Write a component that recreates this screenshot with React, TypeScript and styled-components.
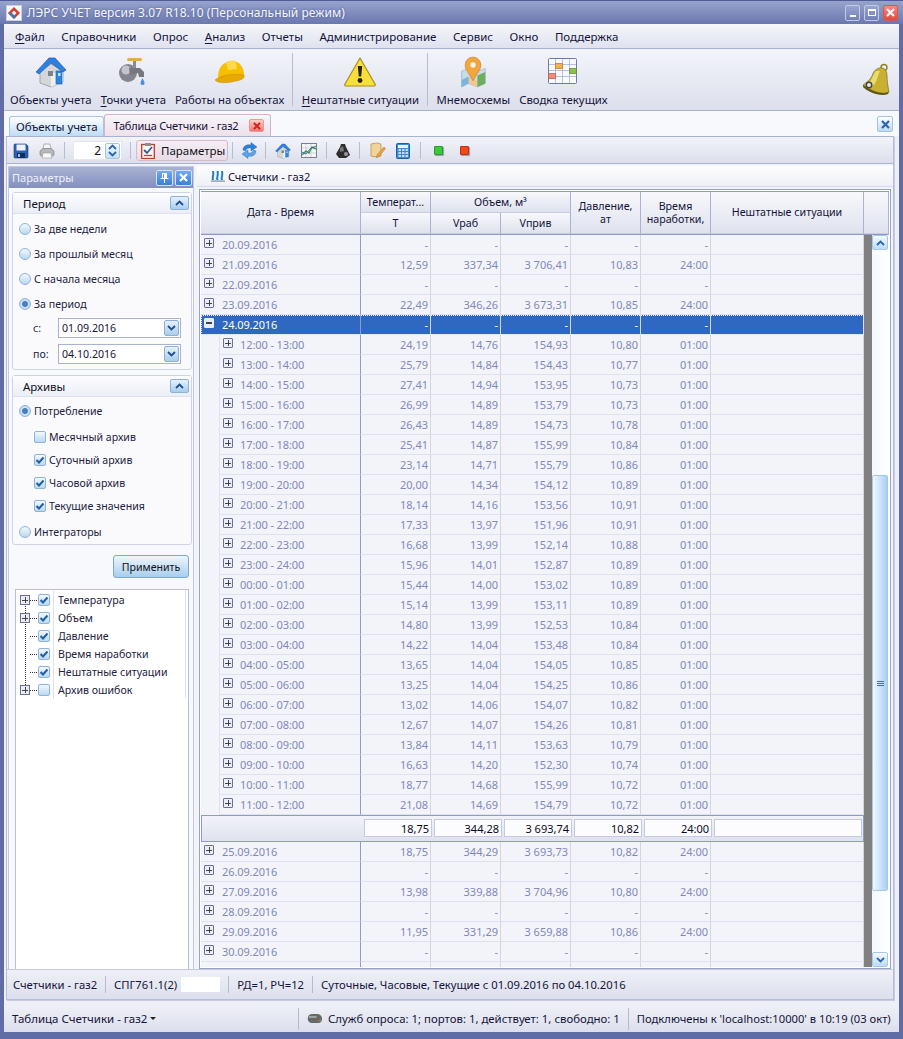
import React from 'react';
import styled, { createGlobalStyle } from 'styled-components';

const font = `"Noto Sans", "Open Sans", "Liberation Sans", sans-serif`;

const GlobalStyle = createGlobalStyle`
  html, body, #root { margin: 0; padding: 0; height: 100%; }
  body { font-family: ${font}; font-size: 11px; color: #111122; overflow: hidden; }
  * { box-sizing: border-box; }
`;

type Row = { label: string; t?: string; vr?: string; vp?: string; p?: string; h?: string };

const before: Row[] = [
  { label: '20.09.2016' },
  { label: '21.09.2016', t: '12,59', vr: '337,34', vp: '3 706,41', p: '10,83', h: '24:00' },
  { label: '22.09.2016' },
  { label: '23.09.2016', t: '22,49', vr: '346,26', vp: '3 673,31', p: '10,85', h: '24:00' },
];

const after: Row[] = [
  { label: '25.09.2016', t: '18,75', vr: '344,29', vp: '3 693,73', p: '10,82', h: '24:00' },
  { label: '26.09.2016' },
  { label: '27.09.2016', t: '13,98', vr: '339,88', vp: '3 704,96', p: '10,80', h: '24:00' },
  { label: '28.09.2016' },
  { label: '29.09.2016', t: '11,95', vr: '331,29', vp: '3 659,88', p: '10,86', h: '24:00' },
  { label: '30.09.2016' },
];

const hourly = [
  ['12:00 - 13:00', '24,19', '14,76', '154,93', '10,80'],
  ['13:00 - 14:00', '25,79', '14,84', '154,43', '10,77'],
  ['14:00 - 15:00', '27,41', '14,94', '153,95', '10,73'],
  ['15:00 - 16:00', '26,99', '14,89', '153,79', '10,73'],
  ['16:00 - 17:00', '26,43', '14,89', '154,73', '10,78'],
  ['17:00 - 18:00', '25,41', '14,87', '155,99', '10,84'],
  ['18:00 - 19:00', '23,14', '14,71', '155,79', '10,86'],
  ['19:00 - 20:00', '20,00', '14,34', '154,12', '10,89'],
  ['20:00 - 21:00', '18,14', '14,16', '153,56', '10,91'],
  ['21:00 - 22:00', '17,33', '13,97', '151,96', '10,91'],
  ['22:00 - 23:00', '16,68', '13,99', '152,14', '10,88'],
  ['23:00 - 24:00', '15,96', '14,01', '152,87', '10,89'],
  ['00:00 - 01:00', '15,44', '14,00', '153,02', '10,89'],
  ['01:00 - 02:00', '15,14', '13,99', '153,11', '10,89'],
  ['02:00 - 03:00', '14,80', '13,99', '152,53', '10,84'],
  ['03:00 - 04:00', '14,22', '14,04', '153,48', '10,84'],
  ['04:00 - 05:00', '13,65', '14,04', '154,05', '10,85'],
  ['05:00 - 06:00', '13,25', '14,04', '154,25', '10,86'],
  ['06:00 - 07:00', '13,02', '14,06', '154,07', '10,82'],
  ['07:00 - 08:00', '12,67', '14,07', '154,26', '10,81'],
  ['08:00 - 09:00', '13,84', '14,11', '153,63', '10,79'],
  ['09:00 - 10:00', '16,63', '14,20', '152,30', '10,74'],
  ['10:00 - 11:00', '18,77', '14,68', '155,99', '10,72'],
  ['11:00 - 12:00', '21,08', '14,69', '154,79', '10,72'],
];

const columns = '160px 70px 70px 70px 70px 70px 153px';

/* ---------- icons ---------- */

const HouseIcon = ({ size = 32 }: { size?: number }) => (
  <svg width={size} height={size} viewBox="0 0 32 32">
    <path d="M5 15 L5 27 L16 31 L28 26 L28 14 L16 8 Z" fill="#d4d6d8" stroke="#8a8f94" strokeWidth="0.7" />
    <path d="M16 31 L28 26 L28 14 L16 18 Z" fill="#eceef0" />
    <path d="M1 16 L14 2 L20 2 L31 14 L28 16 L16 7 L4 18 Z" fill="#2f7fe0" stroke="#1c5cb0" strokeWidth="0.7" />
    <rect x="13" y="15" width="5" height="5" fill="#7d8388" />
    <rect x="21" y="15" width="6" height="13" fill="#2a86e0" stroke="#145fa8" strokeWidth="0.6" />
    <rect x="23" y="17" width="2.5" height="3" fill="#bfe0ff" />
  </svg>
);

const TapIcon = () => (
  <svg width="32" height="32" viewBox="0 0 32 32">
    <circle cx="11" cy="17" r="9" fill="#85858f" />
    <circle cx="9" cy="14" r="4.5" fill="#c4c4cc" />
    <path d="M12 12 L23 12 L27 16 L27 21 L22 21 L21 17 L13 19 Z" fill="#77777f" />
    <rect x="16" y="4" width="3" height="8" fill="#8c8c94" />
    <rect x="10" y="2" width="15" height="3" rx="1.5" fill="#d8b440" />
    <path d="M25.5 22 C24 25 23.6 26 23.6 27.5 A2 2 0 0 0 27.5 27.5 C27.5 26 27 25 25.5 22 Z" fill="#4a8ede" />
  </svg>
);

const HelmetIcon = () => (
  <svg width="32" height="32" viewBox="0 0 32 32">
    <path d="M4 21 C4 10 11 5 18 5 C26 5 30 12 30 19 L30 21 Z" fill="#f6c000" />
    <path d="M12 7 C16 4 20 4 22 6 L23 13 L14 14 Z" fill="#ffd94a" />
    <path d="M1 24 C6 19 22 17 30 19 C31 22 28 24 22 25 C14 27 5 28 1 24 Z" fill="#e8a800" stroke="#c48a00" strokeWidth="0.5" />
  </svg>
);

const WarningIcon = () => (
  <svg width="32" height="32" viewBox="0 0 32 32">
    <path d="M16 2 L31 28 C31.5 29.5 31 30 29.5 30 L2.5 30 C1 30 0.5 29.5 1 28 Z" fill="#f8e03c" stroke="#a88e20" strokeWidth="1.2" strokeLinejoin="round" />
    <path d="M13.8 10 L18.2 10 L17.2 20.5 L14.8 20.5 Z" fill="#2a2410" />
    <circle cx="16" cy="24.5" r="2.4" fill="#2a2410" />
  </svg>
);

const MapIcon = () => (
  <svg width="28" height="32" viewBox="0 0 32 36">
    <path d="M3 17 L11 14 L21 17 L30 14 L30 31 L21 35 L11 31 L3 35 Z" fill="#c8dcec" stroke="#8a9bb0" strokeWidth="0.6" />
    <path d="M11 24 L21 28 L21 35 L11 31 Z" fill="#f0c890" />
    <path d="M21 22 L30 18 L30 31 L21 35 Z" fill="#6fae5c" />
    <path d="M3 27 L11 23 L11 31 L3 35 Z" fill="#7cb4e0" />
    <path d="M16 28 C11 19 7 15 7 10 A9 9 0 0 1 25 10 C25 15 21 19 16 28 Z" fill="#f2a63c" stroke="#b87a26" strokeWidth="0.7" />
    <circle cx="16" cy="10" r="3.6" fill="#fff3de" stroke="#c88a3a" strokeWidth="0.6" />
  </svg>
);

const ScheduleIcon = () => (
  <svg width="30" height="28" viewBox="0 0 30 28">
    <rect x="0.5" y="0.5" width="28" height="25" rx="1" fill="#f8f9fc" stroke="#6e7aa8" />
    <path d="M7.5 1V25M14.5 1V25M21.5 1V25M1 6.5H28M1 12.5H28M1 18.5H28" stroke="#aab2d0" strokeWidth="0.8" />
    <rect x="7.5" y="5.5" width="7" height="5" fill="#f0b44c" stroke="#b07a20" strokeWidth="0.7" />
    <rect x="21.5" y="10.5" width="7" height="5" fill="#8cc04c" stroke="#5f8a28" strokeWidth="0.7" />
    <rect x="0.5" y="15.5" width="7" height="5" fill="#f08c7c" stroke="#b85a4c" strokeWidth="0.7" />
  </svg>
);

const BellIcon = () => (
  <svg width="30" height="34" viewBox="0 0 30 34">
    <circle cx="24" cy="4.5" r="3" fill="none" stroke="#8f7f1c" strokeWidth="1.4" />
    <path d="M17 6 C22 3 27 6 27 12 C27 18 28 24 29 29 C22 33 12 28 3 22 C7 19 10 17 12 13 C13 10 14 7.5 17 6 Z" fill="#c8b030" stroke="#6f6218" strokeWidth="0.6" />
    <path d="M16 8 C13 11 13 15 9 20 L14 22 C17 18 18 12 20 8 Z" fill="#e8dc70" />
    <path d="M3 22 C10 27 20 32 29 29 L28 31 C20 34 8 29 3 24 Z" fill="#5f5514" />
    <circle cx="9" cy="22" r="3.4" fill="#444" />
    <circle cx="9" cy="22" r="2" fill="#e8e8e8" />
  </svg>
);

const SaveIcon = () => (
  <svg width="16" height="16" viewBox="0 0 16 16">
    <path d="M1 2 Q1 1 2 1 H13 L15 3 V14 Q15 15 14 15 H2 Q1 15 1 14 Z" fill="#2a62b0" stroke="#1a3f7c" strokeWidth="0.6" />
    <rect x="3.5" y="1.5" width="9" height="6" fill="#eef3fa" />
    <rect x="4" y="10" width="8" height="5" fill="#12305e" />
    <rect x="5" y="11" width="2" height="3" fill="#9fb8dc" />
  </svg>
);

const PrintIcon = () => (
  <svg width="16" height="16" viewBox="0 0 16 16">
    <path d="M5 1 H11 L12 6 H4 Z" fill="#f4f4f4" stroke="#8a8a8a" strokeWidth="0.6" />
    <path d="M1 8 L4 5.5 H12 L15 8 V12 L12 14 H4 L1 12 Z" fill="#b6b8bc" stroke="#74767a" strokeWidth="0.6" />
    <path d="M4 10 H12 L13 15 H3 Z" fill="#f8f8f8" stroke="#8a8a8a" strokeWidth="0.5" />
  </svg>
);

const RefreshIcon = () => (
  <svg width="17" height="17" viewBox="0 0 17 17">
    <path d="M2 8 C2 4 6 2 10 3 L10 0.5 L16 5 L10 9 L10 6 C7 5.5 5 6.5 4.5 9 Z" fill="#2f80d8" stroke="#1c5ca8" strokeWidth="0.4" />
    <path d="M15 9 C15 13 11 15 7 14 L7 16.5 L1 12 L7 8 L7 11 C10 11.5 12 10.5 12.5 8 Z" fill="#5aa4e8" stroke="#1c5ca8" strokeWidth="0.4" />
  </svg>
);

const ChartIcon = () => (
  <svg width="16" height="15" viewBox="0 0 16 15">
    <rect x="0.5" y="0.5" width="15" height="14" fill="#f4f6fa" stroke="#7a8090" />
    <path d="M1 5H15M1 10H15M5 1V14M10 1V14" stroke="#c4c8d4" strokeWidth="0.7" />
    <path d="M1 12 L5 8 L8 10 L11 4 L15 6" stroke="#3f9f3f" strokeWidth="1.4" fill="none" />
    <path d="M1 9 L5 11 L9 6 L15 3" stroke="#3060b0" strokeWidth="0.9" fill="none" />
  </svg>
);

const BagIcon = () => (
  <svg width="16" height="16" viewBox="0 0 16 16">
    <path d="M6 1 H10 L11 4 L15 12 L11 15 H4 L1 11 L5 4 Z" fill="#2e2e2e" />
    <path d="M5 5 L8 3 L9 8 L5 9 Z" fill="#777" />
    <circle cx="11" cy="11" r="2" fill="#9a9a9a" />
  </svg>
);

const EditIcon = () => (
  <svg width="17" height="17" viewBox="0 0 17 17">
    <path d="M2 2 Q8 0 12 2 V14 Q8 16 2 14 Z" fill="#f0d49a" stroke="#b08a48" strokeWidth="0.7" />
    <path d="M8 13 L15 5 L16.5 6.5 L9.5 15 L7.5 15.5 Z" fill="#f0a43c" stroke="#a06a20" strokeWidth="0.5" />
  </svg>
);

const CalcIcon = () => (
  <svg width="14" height="16" viewBox="0 0 14 16">
    <rect x="0.5" y="0.5" width="13" height="15" rx="1" fill="#3c8ad8" stroke="#1f5ca0" />
    <rect x="2" y="2" width="10" height="3" fill="#eaf4ff" />
    <path d="M2.5 7H5M6 7H8.5M9.5 7H12M2.5 10H5M6 10H8.5M9.5 10H12M2.5 13H5M6 13H8.5M9.5 13H12" stroke="#f2f6fa" strokeWidth="1.6" />
  </svg>
);

const ChecklistIcon = () => (
  <svg width="14" height="16" viewBox="0 0 14 16">
    <rect x="0.7" y="1.5" width="12.6" height="14" fill="#fbf6ee" stroke="#c8382c" strokeWidth="1.3" />
    <rect x="4" y="0" width="6" height="3" fill="#8a8f98" />
    <path d="M3 7 L6 10 L11 4" fill="none" stroke="#2a5fa8" strokeWidth="1.8" />
    <path d="M3 12.5H11" stroke="#c8382c" strokeWidth="1.2" />
  </svg>
);

const MeterIcon = () => (
  <svg width="14" height="12" viewBox="0 0 14 12">
    <path d="M1 1 C2 5 0 8 1 10 H3 C2 7 4 5 3 1 Z M5.5 1 C6.5 5 4.5 8 5.5 10 H7.5 C6.5 7 8.5 5 7.5 1 Z M10 1 C11 5 9 8 10 10 H12 C11 7 13 5 12 1 Z" fill="#1f7fc4" />
    <rect x="0" y="10.5" width="14" height="1.2" fill="#8090a8" />
  </svg>
);

const ServerIcon = () => (
  <svg width="16" height="10" viewBox="0 0 16 10">
    <path d="M1 3 Q2 0 5 0 H11 Q15 1 15 5 Q15 9 11 9 H4 Q0 8 1 3 Z" fill="#666a66" />
    <path d="M2 2 H10 L9 4 H2 Z" fill="#a0a4a0" />
    <rect x="10" y="6" width="2" height="1.2" fill="#d44" />
    <rect x="12.4" y="6" width="1.6" height="1.2" fill="#4c4" />
  </svg>
);

const AppIcon = () => (
  <svg width="16" height="16" viewBox="0 0 16 16">
    <rect x="0.5" y="0.5" width="15" height="15" fill="#f6f8fc" stroke="#c8d0e0" />
    <path d="M8 2 L14 8 L8 14 L2 8 Z" fill="#d83a2c" />
    <path d="M8 5.5 L10.5 8 L8 10.5 L5.5 8 Z" fill="#f6f8fc" />
    <path d="M2 8 L8 14 L10 12 L6 8 Z" fill="#2c80c8" opacity="0.85" />
  </svg>
);

const Chevron = ({ up, color = '#2a66b0' }: { up?: boolean; color?: string }) => (
  <svg width="9" height="6" viewBox="0 0 9 6">
    <path d={up ? 'M1 5 L4.5 1.5 L8 5' : 'M1 1 L4.5 4.5 L8 1'} fill="none" stroke={color} strokeWidth="1.8" />
  </svg>
);

const CrossMark = ({ color = '#ffffff', size = 9 }: { color?: string; size?: number }) => (
  <svg width={size} height={size} viewBox="0 0 9 9">
    <path d="M1 1 L8 8 M8 1 L1 8" stroke={color} strokeWidth="2.2" />
  </svg>
);

/* ---------- frame ---------- */

const Page = styled.div`
  display: flex;
  flex-direction: column;
  width: 903px;
  height: 1039px;
  overflow: hidden;
  background: #5f6ca6;
  padding: 0 4px 7px;
`;

const TitleBar = styled.div`
  display: flex;
  align-items: center;
  height: 24px;
  flex: none;
  margin: 0 -4px;
  padding: 0 5px 0 6px;
  background: linear-gradient(#98a3cc, #6a78b0);
  border-top: 1px solid #4f5c98;
  color: #f4f6fc;
  font-size: 12px;
  gap: 5px;
`;

const TitleText = styled.span`
  flex: 1;
  letter-spacing: 0.05px;
  text-shadow: 0 0 3px #4a5790;
`;

const WindowButtons = styled.div`
  display: flex;
  gap: 4px;
`;

const WindowButton = styled.div<{ $close?: boolean }>`
  display: flex;
  align-items: center;
  justify-content: center;
  width: 15px;
  height: 16px;
  border: 1px solid ${(p) => (p.$close ? '#d05a5a' : '#c2cae4')};
  border-radius: 2px;
  background: ${(p) => (p.$close ? 'linear-gradient(#f48a80, #e8473c)' : 'linear-gradient(#9aa5cf, #7280b8)')};
`;

const MinMark = styled.span`
  width: 6px;
  height: 2px;
  background: #fff;
  margin-top: 6px;
`;

const MaxMark = styled.span`
  width: 8px;
  height: 7px;
  border: 1px solid #fff;
  border-top-width: 2px;
`;

const Shell = styled.div`
  flex: 1;
  display: flex;
  flex-direction: column;
  min-height: 0;
  background: #eff0f7;
`;

const MenuBar = styled.div`
  display: flex;
  align-items: center;
  height: 25px;
  flex: none;
  padding-left: 11px;
  gap: 16.6px;
  background: linear-gradient(#f5f6fb, #dfe2ee);
  border-bottom: 1px solid #a9b2d4;
  color: #14143a;
  font-size: 11.5px;
`;

const Mnemonic = styled.span`
  text-decoration: underline;
  text-underline-offset: 2px;
`;

const BigToolbar = styled.div`
  display: flex;
  align-items: stretch;
  height: 61px;
  flex: none;
  margin-top: 1px;
  padding: 2px 0 3px 1.5px;
  background: linear-gradient(#f3f4fa, #dcdfec);
  border-bottom: 1px solid #a9b2d4;
`;

const BigButton = styled.div`
  display: flex;
  flex-direction: column;
  align-items: center;
  justify-content: space-between;
  padding: 1px 4.5px 0;
  font-size: 11.35px;
  color: #14143a;
  white-space: nowrap;
`;

const BigIconSlot = styled.div`
  height: 38px;
  display: flex;
  align-items: center;
`;

const BigSep = styled.div`
  width: 1px;
  margin: 1px 4px 1px 3.5px;
  background: #b6bcd6;
`;

const BellSlot = styled.div`
  margin-left: auto;
  margin-right: 9px;
  align-self: center;
  padding-top: 4px;
`;

const TabStrip = styled.div`
  display: flex;
  align-items: flex-end;
  height: 25px;
  flex: none;
  padding-left: 5px;
  background: #f8f9fc;
`;

const Tab = styled.div<{ $active?: boolean }>`
  display: flex;
  align-items: center;
  gap: 9px;
  height: ${(p) => (p.$active ? 22 : 20)}px;
  padding: ${(p) => (p.$active ? '0 6px 0 8px' : '0 6px')};
  border: 1px solid ${(p) => (p.$active ? '#d8b4cc' : '#a9c4e4')};
  border-bottom: none;
  border-radius: 3px 3px 0 0;
  background: ${(p) => (p.$active ? 'linear-gradient(#f8f4f8, #eee0ea)' : 'linear-gradient(#ffffff, #bcdcf4)')};
  font-size: ${(p) => (p.$active ? 11 : 11.5)}px;
  letter-spacing: ${(p) => (p.$active ? -0.2 : -0.1)}px;
  color: #14143a;
`;

const TabClose = styled.div`
  display: flex;
  align-items: center;
  justify-content: center;
  width: 15px;
  height: 13px;
  margin-left: 2px;
  border: 1px solid #e89a9a;
  border-radius: 2px;
  background: linear-gradient(#fbd0cc, #ee7a70);
`;

const StripClose = styled.div`
  display: flex;
  align-items: center;
  justify-content: center;
  width: 16px;
  height: 16px;
  margin: 0 6px 4px auto;
  border: 1px solid #a4c4e4;
  border-radius: 2px;
  background: linear-gradient(#ffffff, #bcdcf4);
`;

const Doc = styled.div`
  flex: 1;
  min-height: 0;
  display: flex;
  flex-direction: column;
  margin-right: 5px;
  margin-left: 2px;
  border: 1px solid #b6bcda;
  border-top: 1px solid #a9b2d4;
  background: #f3f4f9;
  box-shadow: 1px 1px 0 #c8cce0;
`;

const DocToolbar = styled.div`
  display: flex;
  align-items: center;
  height: 26px;
  flex: none;
  padding: 0 1px;
  margin: 1px 0 2px;
  background: linear-gradient(#f2f3f9, #dcdfec);
  border-bottom: 1px solid #a9b2d4;
`;

const ToolSlot = styled.div<{ $w?: number }>`
  display: flex;
  align-items: center;
  justify-content: center;
  width: ${(p) => p.$w ?? 26}px;
  height: 20px;
`;

const ToolSep = styled.div`
  width: 1px;
  height: 17px;
  margin: 0 4px;
  background: #b8bdd6;
`;

const Spinner = styled.div`
  display: flex;
  align-items: center;
  justify-content: flex-end;
  width: 49px;
  height: 19px;
  margin: 0 4px;
  padding-right: 1px;
  gap: 4px;
  background: #fff;
  border: 1px solid #e4e6f0;
  font-size: 12px;
`;

const SpinButtons = styled.div`
  display: flex;
  flex-direction: column;
  align-items: center;
  justify-content: center;
  gap: 1px;
  width: 15px;
  height: 16px;
  border: 1px solid #a4c4e4;
  border-radius: 2px;
  background: linear-gradient(#f4faff, #c4e0f6);
`;

const ParamsButton = styled.div`
  display: flex;
  align-items: center;
  gap: 6px;
  width: 92px;
  height: 21px;
  margin-left: 1px;
  padding-left: 4px;
  border: 1px solid #d8b8cc;
  border-radius: 3px;
  background: linear-gradient(#f6eef4, #e8dce6);
  font-size: 11.5px;
`;

const LedDot = styled.div<{ $color: string; $edge: string }>`
  width: 9px;
  height: 9px;
  border-radius: 1px;
  border: 1px solid ${(p) => p.$edge};
  background: ${(p) => p.$color};
  box-shadow: 1px 1px 1px #9a9aa8;
`;

const DocBody = styled.div`
  flex: 1;
  min-height: 0;
  display: flex;
`;

/* ---------- parameters panel ---------- */

const SidePanel = styled.div`
  width: 186px;
  flex: none;
  margin-left: 1px;
  display: flex;
  flex-direction: column;
  background: #f8f9fc;
  border: 1px solid #c4c9e0;
  border-bottom: none;
`;

const SideHeader = styled.div`
  display: flex;
  align-items: center;
  height: 21px;
  flex: none;
  padding: 0 1px 0 3px;
  gap: 2px;
  background: linear-gradient(#a8b2d4, #848fbe);
  color: #eef0fa;
  font-size: 11px;
`;

const SideTitle = styled.span`
  flex: 1;
`;

const SideButton = styled.div`
  display: flex;
  align-items: center;
  justify-content: center;
  width: 17px;
  height: 16px;
  border: 1px solid #d4e4f8;
  border-radius: 2px;
  background: linear-gradient(#72aaf0, #3c7ed8);
`;

const GroupBox = styled.div<{ $h: number; $mt: number }>`
  display: flex;
  flex-direction: column;
  flex: none;
  height: ${(p) => p.$h}px;
  margin: ${(p) => p.$mt}px 1px 2px 3px;
  border: 1px solid #cfd3e6;
  border-radius: 3px;
  background: #fafafd;
`;

const GroupHead = styled.div`
  display: flex;
  align-items: center;
  justify-content: space-between;
  height: 21px;
  flex: none;
  padding: 0 2px 0 10px;
  background: linear-gradient(#fdfdff, #eceef6);
  border-bottom: 1px solid #dde0ee;
  font-size: 11.5px;
`;

const Collapse = styled.div`
  display: flex;
  align-items: center;
  justify-content: center;
  width: 19px;
  height: 14px;
  border: 1px solid #8cb0d8;
  border-radius: 2px;
  background: linear-gradient(#e6f2fc, #a8cdec);
`;

const DropButton = styled.span`
  display: flex;
  align-items: center;
  justify-content: center;
  width: 15px;
  height: 16px;
  border: 1px solid #8cb0d8;
  border-radius: 2px;
  background: linear-gradient(#e6f2fc, #a8cdec);
`;

const RadioRow = styled.div<{ $mt?: number }>`
  display: flex;
  align-items: center;
  gap: 3px;
  height: 14px;
  margin: ${(p) => p.$mt ?? 11}px 0 0 6px;
  font-size: 10.6px;
  color: #22223c;
`;

const Radio = styled.span<{ $on?: boolean }>`
  display: block;
  width: 12px;
  height: 12px;
  border-radius: 50%;
  border: 1px solid #8fb4dc;
  background: ${(p) =>
    p.$on
      ? 'radial-gradient(circle, #4a80c0 0 2.5px, #cfe2f4 3.5px, #b4d2ee 100%)'
      : 'linear-gradient(#f2f8fd, #bcd8f0)'};
`;

const CheckRow = styled.div<{ $mt?: number }>`
  display: flex;
  align-items: center;
  gap: 3px;
  height: 14px;
  margin: ${(p) => p.$mt ?? 9}px 0 0 21px;
  font-size: 10.6px;
  color: #22223c;
`;

const CheckBox = styled.span`
  display: flex;
  align-items: center;
  justify-content: center;
  flex: none;
  width: 12px;
  height: 12px;
  border: 1px solid #8fb4dc;
  border-radius: 2px;
  background: linear-gradient(#f2f8fd, #bcd8f0);
`;

const Check = ({ on }: { on?: boolean }) => (
  <CheckBox>
    {on && (
      <svg width="10" height="9" viewBox="0 0 10 9">
        <path d="M1.5 4 L4 6.5 L8.5 1.5" fill="none" stroke="#22609f" strokeWidth="2" />
      </svg>
    )}
  </CheckBox>
);

const DateRow = styled.div`
  display: flex;
  align-items: center;
  height: 20px;
  margin: 7px 0 -1px 20px;
  font-size: 10.6px;
  color: #22223c;
`;

const DateLabel = styled.span`
  width: 25px;
`;

const DateField = styled.div`
  display: flex;
  align-items: center;
  justify-content: space-between;
  width: 123px;
  height: 20px;
  padding: 0 1px 0 3px;
  background: #fff;
  border: 1px solid #a9b2d4;
  color: #16163a;
`;

const Apply = styled.div`
  display: flex;
  align-items: center;
  justify-content: center;
  align-self: flex-end;
  flex: none;
  width: 76px;
  height: 23px;
  margin: 8px 4px 0 0;
  border: 1px solid #7da6d2;
  border-radius: 3px;
  background: linear-gradient(#eef6fc, #a8cdec);
  font-size: 10.6px;
`;

const Tree = styled.div`
  position: relative;
  flex: 1;
  margin: 11px 4px 0 6px;
  padding: 1px 0 0 4px;
  background: #fff;
  border: 1px solid #b8bedc;
  border-bottom: none;
  &::before {
    content: '';
    position: absolute;
    left: 9px;
    top: 11px;
    height: 90px;
    border-left: 1px dotted #333;
  }
  &::after {
    content: '';
    position: absolute;
    top: 0;
    right: 2px;
    width: 1px;
    height: 108px;
    background: #dfe2ee;
  }
`;

const TreeRow = styled.div`
  display: flex;
  align-items: center;
  height: 18px;
  font-size: 10.6px;
  color: #22223c;
`;

const TreeToggle = styled.span<{ $blank?: boolean }>`
  position: relative;
  z-index: 1;
  display: block;
  flex: none;
  width: 10px;
  height: 10px;
  border: 1px solid ${(p) => (p.$blank ? 'transparent' : '#6a6f9c')};
  background: ${(p) =>
    p.$blank
      ? 'transparent'
      : 'linear-gradient(#444 0 0) center / 6px 1px no-repeat, linear-gradient(#444 0 0) center / 1px 6px no-repeat, #e8eaf4'};
`;

const TreeDots = styled.span`
  width: 7px;
  flex: none;
  margin-right: 1px;
  border-top: 1px dotted #333;
`;

const TreeLabel = styled.span`
  display: flex;
  align-items: center;
  height: 18px;
  margin-left: 3px;
  padding-left: 4px;
  border-left: 1px solid #dfe2ee;
`;

/* ---------- grid ---------- */

const GridSide = styled.div`
  flex: 1;
  min-width: 0;
  display: flex;
  flex-direction: column;
  margin-left: 3px;
`;

const GridCaption = styled.div`
  display: flex;
  align-items: center;
  gap: 3px;
  height: 21px;
  flex: none;
  padding-left: 14px;
  background: linear-gradient(#fdfdfe, #eff0f7);
  border-bottom: 1px solid #d8dbea;
  font-size: 11px;
  color: #14143a;
`;

const GridFrame = styled.div`
  display: flex;
  flex-direction: column;
  flex: 1;
  min-height: 0;
  margin: 2px 2px 0 2px;
  border: 1px solid #9aa2c4;
  padding: 1px;
  background: #fff;
`;

const GridHead = styled.div`
  display: grid;
  grid-template-columns: ${columns} 1fr;
  grid-template-rows: 21px 21px;
  flex: none;
  border-top: 1px solid #8f9ac8;
  border-bottom: 1px solid #8f9ac8;
  background: #8f9ac8;
  font-size: 10.7px;
  color: #14143a;
`;

const HeadCell = styled.div<{ $col: string; $row: string }>`
  display: flex;
  align-items: center;
  justify-content: center;
  grid-column: ${(p) => p.$col};
  grid-row: ${(p) => p.$row};
  text-align: center;
  line-height: 13px;
  padding: 0 2px;
  background: linear-gradient(#f8f8fc, #dfe2ee);
  border-right: 1px solid #a9b2d4;
  border-bottom: 1px solid #c8cce0;
`;

const GridBody = styled.div`
  flex: 1;
  min-height: 0;
  display: flex;
`;

const Rows = styled.div`
  flex: 1;
  min-width: 0;
  overflow: hidden;
  background: #f3f4f9;
`;

const DataRow = styled.div<{ $selected?: boolean }>`
  display: grid;
  grid-template-columns: ${columns};
  height: 20px;
  font-size: 11px;
  color: ${(p) => (p.$selected ? '#ffffff' : '#8288bb')};
  background: ${(p) => (p.$selected ? '#2f68c1' : 'transparent')};
  outline: ${(p) => (p.$selected ? '1px dotted #e8eefa' : 'none')};
  outline-offset: -1px;
`;

const DateCell = styled.div<{ $child?: boolean }>`
  display: flex;
  align-items: center;
  gap: ${(p) => (p.$child ? 7 : 8)}px;
  padding-left: 3px;
  margin-left: ${(p) => (p.$child ? 18 : 0)}px;
  border-left: ${(p) => (p.$child ? '1px solid #dfe1f0' : 'none')};
  border-bottom: 1px solid #dfe1f0;
  border-right: 1px solid #8f9ac8;
  letter-spacing: -0.1px;
`;

const NumCell = styled.div`
  display: flex;
  align-items: center;
  justify-content: flex-end;
  padding-right: 2px;
  border-right: 1px solid #d4d5de;
  border-bottom: 1px solid #dfe1f0;
`;

const Expander = styled.span<{ $open?: boolean; $light?: boolean }>`
  display: block;
  flex: none;
  width: 10px;
  height: 10px;
  margin-top: -3px;
  border: 1px solid ${(p) => (p.$light ? '#e8eefa' : '#6a6f9c')};
  border-radius: 1px;
  background: ${(p) =>
    p.$open
      ? 'linear-gradient(#444 0 0) center / 6px 2px no-repeat, #e8eaf4'
      : 'linear-gradient(#444 0 0) center / 6px 1px no-repeat, linear-gradient(#444 0 0) center / 1px 6px no-repeat, #eceef6'};
`;

const FooterRow = styled.div`
  display: grid;
  grid-template-columns: ${columns};
  height: 27px;
  padding: 3px 0 4px;
  background: linear-gradient(#f2f3f9, #dfe2ee);
  border: 1px solid #8f9ac8;
  font-size: 11px;
  color: #0a0a20;
`;

const FooterCell = styled.div<{ $wide?: boolean }>`
  display: flex;
  align-items: center;
  justify-content: flex-end;
  margin-left: 2px;
  margin-right: ${(p) => (p.$wide ? 3 : 0)}px;
  padding-right: 2px;
  background: #fcfcfe;
  border: 1px solid #c4c9e2;
`;

const TailRow = styled.div`
  display: grid;
  grid-template-columns: ${columns};
  height: 20px;
`;

const TailCell = styled.div<{ $first?: boolean }>`
  border-right: 1px solid ${(p) => (p.$first ? '#8f9ac8' : '#d4d5de')};
`;

const GrayStrip = styled.div`
  width: 8px;
  flex: none;
  background: #808080;
`;

const ScrollBar = styled.div`
  display: flex;
  flex-direction: column;
  width: 16px;
  flex: none;
  margin-right: 1px;
  background: linear-gradient(90deg, #f2f9ff, #ffffff);
`;

const ScrollArrow = styled.div`
  display: flex;
  align-items: center;
  justify-content: center;
  flex: none;
  height: 15px;
  border: 1px solid #a4c8ec;
  border-radius: 2px;
  background: linear-gradient(#f4faff, #bcdcf6);
`;

const ScrollTrack = styled.div`
  flex: 1;
  padding-top: 225px;
  padding-bottom: 61px;
  display: flex;
  min-height: 0;
`;

const ScrollThumb = styled.div`
  display: flex;
  align-items: center;
  justify-content: center;
  flex: 1;
  border: 1px solid #a4c8ec;
  border-radius: 2px;
  background: linear-gradient(90deg, #f0f8ff, #a8d0f4);
`;

const Grip = styled.span`
  width: 7px;
  height: 5px;
  border-top: 1px solid #4a6f9c;
  border-bottom: 1px solid #4a6f9c;
  background: linear-gradient(#4a6f9c 0 0) center / 100% 1px no-repeat;
`;

/* ---------- status bars ---------- */

const DocStatus = styled.div`
  display: flex;
  align-items: center;
  height: 30px;
  flex: none;
  padding-left: 6px;
  background: linear-gradient(#eff0f7, #dcdfec);
  border-top: 1px solid #c4c9e0;
  font-size: 11.25px;
  color: #14143a;
  white-space: nowrap;
`;

const StatusSep = styled.div<{ $h?: number }>`
  width: 1px;
  height: ${(p) => p.$h ?? 17}px;
  margin: 0 8px;
  flex: none;
  background: #b4bad4;
`;

const Masked = styled.span`
  display: block;
  width: 39px;
  height: 15px;
  margin: 0 0 0 4px;
  background: #ffffff;
`;

const BottomBar = styled.div`
  display: flex;
  align-items: center;
  height: 27px;
  flex: none;
  margin-top: 5px;
  padding-left: 8px;
  background: linear-gradient(#eff0f7, #dcdfec);
  color: #14143a;
  white-space: nowrap;
`;

const BottomLead = styled.div`
  display: flex;
  align-items: center;
  gap: 3px;
  width: 278px;
  flex: none;
  font-size: 11.5px;
`;

const BottomText = styled.span<{ $size: number }>`
  font-size: ${(p) => p.$size}px;
`;

const DropMark = styled.span`
  width: 0;
  height: 0;
  border-left: 3px solid transparent;
  border-right: 3px solid transparent;
  border-top: 3px solid #222;
`;

const ServerSlot = styled.span`
  display: flex;
  margin-right: 5px;
`;

const cells = (r: Row) => [r.t, r.vr, r.vp, r.p, r.h].map((v, i) => <NumCell key={i}>{v ?? '-'}</NumCell>);

const GroupRow = ({ row }: { row: Row }) => (
  <DataRow>
    <DateCell>
      <Expander />
      <span>{row.label}</span>
    </DateCell>
    {cells(row)}
    <NumCell />
  </DataRow>
);

const treeItems = [
  { label: 'Температура', on: true, expand: true },
  { label: 'Объем', on: true, expand: true },
  { label: 'Давление', on: true },
  { label: 'Время наработки', on: true },
  { label: 'Нештатные ситуации', on: true },
  { label: 'Архив ошибок', on: false, expand: true },
];

const App = () => {
  return (
    <Page>
      <GlobalStyle />
      <TitleBar>
        <AppIcon />
        <TitleText>ЛЭРС УЧЕТ версия 3.07 R18.10 (Персональный режим)</TitleText>
        <WindowButtons>
          <WindowButton><MinMark /></WindowButton>
          <WindowButton><MaxMark /></WindowButton>
          <WindowButton $close><CrossMark /></WindowButton>
        </WindowButtons>
      </TitleBar>
      <Shell>
        <MenuBar>
          <span><Mnemonic>Ф</Mnemonic>айл</span>
          <span>Справочники</span>
          <span>Опрос</span>
          <span><Mnemonic>А</Mnemonic>нализ</span>
          <span>Отчеты</span>
          <span>Администрирование</span>
          <span>Сервис</span>
          <span>Окно</span>
          <span>Поддержка</span>
        </MenuBar>
        <BigToolbar>
          <BigButton><BigIconSlot><HouseIcon /></BigIconSlot><span>Объекты учета</span></BigButton>
          <BigButton><BigIconSlot><TapIcon /></BigIconSlot><span><Mnemonic>Т</Mnemonic>очки учета</span></BigButton>
          <BigButton><BigIconSlot><HelmetIcon /></BigIconSlot><span>Работы на объектах</span></BigButton>
          <BigSep />
          <BigButton><BigIconSlot><WarningIcon /></BigIconSlot><span><Mnemonic>Н</Mnemonic>ештатные ситуации</span></BigButton>
          <BigSep />
          <BigButton><BigIconSlot><MapIcon /></BigIconSlot><span>Мнемосхемы</span></BigButton>
          <BigButton><BigIconSlot><ScheduleIcon /></BigIconSlot><span>Сводка текущих</span></BigButton>
          <BellSlot><BellIcon /></BellSlot>
        </BigToolbar>
        <TabStrip>
          <Tab>Объекты учета</Tab>
          <Tab $active>
            Таблица Счетчики - газ2
            <TabClose><CrossMark color="#d02020" size={8} /></TabClose>
          </Tab>
          <StripClose><CrossMark color="#2a66b0" /></StripClose>
        </TabStrip>
        <Doc>
          <DocToolbar>
            <ToolSlot><SaveIcon /></ToolSlot>
            <ToolSlot><PrintIcon /></ToolSlot>
            <ToolSep />
            <Spinner>
              2
              <SpinButtons><Chevron up /><Chevron /></SpinButtons>
            </Spinner>
            <ToolSep />
            <ParamsButton><ChecklistIcon />Параметры</ParamsButton>
            <ToolSep />
            <ToolSlot $w={24}><RefreshIcon /></ToolSlot>
            <ToolSep />
            <ToolSlot><HouseIcon size={16} /></ToolSlot>
            <ToolSlot><ChartIcon /></ToolSlot>
            <ToolSep />
            <ToolSlot $w={24}><BagIcon /></ToolSlot>
            <ToolSep />
            <ToolSlot><EditIcon /></ToolSlot>
            <ToolSlot><CalcIcon /></ToolSlot>
            <ToolSep />
            <ToolSlot><LedDot $color="#3cc83c" $edge="#2a9a2a" /></ToolSlot>
            <ToolSlot><LedDot $color="#f0481c" $edge="#c03010" /></ToolSlot>
          </DocToolbar>
          <DocBody>
            <SidePanel>
              <SideHeader>
                <SideTitle>Параметры</SideTitle>
                <SideButton>
                  <svg width="9" height="11" viewBox="0 0 9 11">
                    <path d="M2 1H7V6H8.5V7H5V11H4V7H0.5V6H2Z M3 2V6H4V2Z" fill="#fff" />
                  </svg>
                </SideButton>
                <SideButton><CrossMark /></SideButton>
              </SideHeader>
              <GroupBox $h={178} $mt={4}>
                <GroupHead>
                  Период
                  <Collapse><Chevron up color="#1f4f90" /></Collapse>
                </GroupHead>
                <RadioRow $mt={8}><Radio />За две недели</RadioRow>
                <RadioRow><Radio />За прошлый месяц</RadioRow>
                <RadioRow><Radio />С начала месяца</RadioRow>
                <RadioRow><Radio $on />За период</RadioRow>
                <DateRow>
                  <DateLabel>с:</DateLabel>
                  <DateField>01.09.2016<DropButton><Chevron color="#1f4f90" /></DropButton></DateField>
                </DateRow>
                <DateRow>
                  <DateLabel>по:</DateLabel>
                  <DateField>04.10.2016<DropButton><Chevron color="#1f4f90" /></DropButton></DateField>
                </DateRow>
              </GroupBox>
              <GroupBox $h={170} $mt={3}>
                <GroupHead>
                  Архивы
                  <Collapse><Chevron up color="#1f4f90" /></Collapse>
                </GroupHead>
                <RadioRow $mt={7}><Radio $on />Потребление</RadioRow>
                <CheckRow $mt={12}><Check />Месячный архив</CheckRow>
                <CheckRow><Check on />Суточный архив</CheckRow>
                <CheckRow><Check on />Часовой архив</CheckRow>
                <CheckRow><Check on />Текущие значения</CheckRow>
                <RadioRow $mt={12}><Radio />Интеграторы</RadioRow>
              </GroupBox>
              <Apply>Применить</Apply>
              <Tree>
                {treeItems.map((item) => (
                  <TreeRow key={item.label}>
                    <TreeToggle $blank={!item.expand} />
                    <TreeDots />
                    <Check on={item.on} />
                    <TreeLabel>{item.label}</TreeLabel>
                  </TreeRow>
                ))}
              </Tree>
            </SidePanel>
            <GridSide>
              <GridCaption><MeterIcon />Счетчики - газ2</GridCaption>
              <GridFrame>
                <GridHead>
                  <HeadCell $col="1" $row="1 / 3">Дата - Время</HeadCell>
                  <HeadCell $col="2" $row="1">Температ...</HeadCell>
                  <HeadCell $col="3 / 5" $row="1">Объем, м³</HeadCell>
                  <HeadCell $col="2" $row="2">Т</HeadCell>
                  <HeadCell $col="3" $row="2">Vраб</HeadCell>
                  <HeadCell $col="4" $row="2">Vприв</HeadCell>
                  <HeadCell $col="5" $row="1 / 3">Давление, ат</HeadCell>
                  <HeadCell $col="6" $row="1 / 3">Время наработки,</HeadCell>
                  <HeadCell $col="7" $row="1 / 3">Нештатные ситуации</HeadCell>
                  <HeadCell $col="8" $row="1 / 3" />
                </GridHead>
                <GridBody>
                  <Rows>
                    {before.map((r) => <GroupRow key={r.label} row={r} />)}
                    <DataRow $selected>
                      <DateCell>
                        <Expander $open $light />
                        <span>24.09.2016</span>
                      </DateCell>
                      {cells({ label: '' })}
                      <NumCell />
                    </DataRow>
                    {hourly.map(([label, t, vr, vp, p]) => (
                      <DataRow key={label}>
                        <DateCell $child>
                          <Expander />
                          <span>{label}</span>
                        </DateCell>
                        {cells({ label, t, vr, vp, p, h: '01:00' })}
                        <NumCell />
                      </DataRow>
                    ))}
                    <FooterRow>
                      <span />
                      <FooterCell>18,75</FooterCell>
                      <FooterCell>344,28</FooterCell>
                      <FooterCell>3 693,74</FooterCell>
                      <FooterCell>10,82</FooterCell>
                      <FooterCell>24:00</FooterCell>
                      <FooterCell $wide />
                    </FooterRow>
                    {after.map((r) => <GroupRow key={r.label} row={r} />)}
                    <TailRow>
                      <TailCell $first />
                      <TailCell /><TailCell /><TailCell /><TailCell /><TailCell /><TailCell />
                    </TailRow>
                  </Rows>
                  <GrayStrip />
                  <ScrollBar>
                    <ScrollArrow><Chevron up /></ScrollArrow>
                    <ScrollTrack><ScrollThumb><Grip /></ScrollThumb></ScrollTrack>
                    <ScrollArrow><Chevron /></ScrollArrow>
                  </ScrollBar>
                </GridBody>
              </GridFrame>
            </GridSide>
          </DocBody>
          <DocStatus>
            <span>Счетчики - газ2</span>
            <StatusSep />
            <span>СПГ761.1(2)</span>
            <Masked />
            <StatusSep />
            <span>РД=1, РЧ=12</span>
            <StatusSep />
            <span>Суточные, Часовые, Текущие с 01.09.2016 по 04.10.2016</span>
          </DocStatus>
        </Doc>
        <BottomBar>
          <BottomLead>Таблица Счетчики - газ2 <DropMark /></BottomLead>
          <StatusSep $h={22} />
          <ServerSlot><ServerIcon /></ServerSlot>
          <BottomText $size={11.4}>Служб опроса: 1; портов: 1, действует: 1, свободно: 1</BottomText>
          <StatusSep $h={22} />
          <BottomText $size={11.2}>Подключены к 'localhost:10000' в 10:19 (03 окт)</BottomText>
        </BottomBar>
      </Shell>
    </Page>
  );
};

export default App;
